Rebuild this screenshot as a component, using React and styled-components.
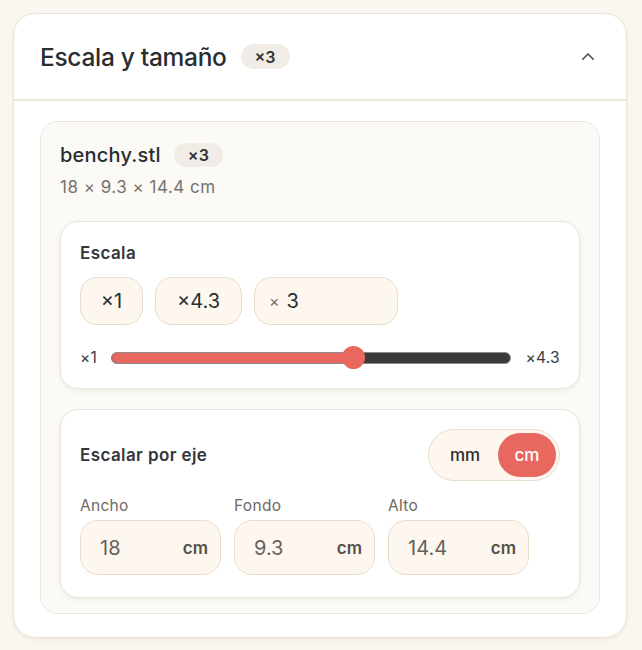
import React from 'react'
import styled, { createGlobalStyle } from 'styled-components'

const Global = createGlobalStyle`
  html, body {
    margin: 0;
    background: #fbf6ef;
    font-family: Inter, "Noto Sans", sans-serif;
    color: #2a2d31;
  }
  * { box-sizing: border-box; }
`

const Page = styled.div`
  padding: 13px 15px 12px 13px;
`

const Card = styled.section`
  background: #fff;
  border: 1px solid #e9e3d9;
  border-radius: 22px;
  box-shadow: 0 2px 4px rgba(120, 100, 70, 0.08);
  overflow: hidden;
`

const Header = styled.div`
  display: flex;
  align-items: center;
  justify-content: space-between;
  height: 87px;
  padding: 0 26px 0 26px;
  border-bottom: 2px solid #eee8df;
`

const TitleRow = styled.div`
  display: flex;
  align-items: center;
  gap: 14px;
`

const Title = styled.h2`
  margin: 0;
  font-size: 24.5px;
  font-weight: 500;
  letter-spacing: -0.3px;
  color: #2a2d31;
`

const Badge = styled.span`
  display: inline-flex;
  align-items: center;
  justify-content: center;
  height: ${({ $h }) => $h || 25}px;
  padding: 0 14px;
  border-radius: 999px;
  background: #f1ede6;
  font-size: 16px;
  font-weight: 600;
  color: #2f3134;
`

const Body = styled.div`
  padding: 20px 26px 23px 26px;
`

const FileCard = styled.div`
  background: #fbfaf7;
  border: 1px solid #ebe5db;
  border-radius: 18px;
  padding: 19px 19px 15px 19px;
`

const FileName = styled.div`
  display: flex;
  align-items: center;
  gap: 13px;
  font-size: 20px;
  font-weight: 500;
  letter-spacing: 0.2px;
  color: #2a2d31;
  height: 28px;
`

const Dims = styled.div`
  margin-top: 8px;
  font-size: 17px;
  letter-spacing: 0.5px;
  color: #77726c;
`

const Panel = styled.div`
  margin-top: ${({ $mt }) => $mt}px;
  background: #fff;
  border: 1px solid #ebe4da;
  border-radius: 18px;
  box-shadow: 0 2px 5px rgba(120, 100, 70, 0.09);
  padding: ${({ $pad }) => $pad};
`

const PanelTitle = styled.div`
  font-size: 17px;
  font-weight: 600;
  letter-spacing: 0.4px;
  color: #33363a;
`

const Chips = styled.div`
  display: flex;
  gap: 12px;
  margin-top: 14px;
`

const Chip = styled.div`
  display: flex;
  align-items: center;
  justify-content: ${({ $left }) => ($left ? 'flex-start' : 'center')};
  gap: 7px;
  height: 48px;
  width: ${({ $w }) => $w}px;
  padding: 0 14px;
  background: #fdf7ef;
  border: 1px solid #e8ddcd;
  border-radius: 17px;
  font-size: 20px;
  font-weight: 400;
  color: #2a2d31;
`

const Times = styled.span`
  font-size: 16px;
  color: #77726c;
`

const SliderRow = styled.div`
  display: flex;
  align-items: center;
  gap: 14px;
  margin-top: 23px;
  font-size: 15.5px;
  letter-spacing: 0.3px;
  color: #3a3c3f;
`

const Track = styled.div`
  position: relative;
  flex: 1;
  height: 12px;
  border-radius: 6px;
  background: #3a3a3a;
  border: 1px solid #8c8c8c;
`

const Fill = styled.div`
  height: 100%;
  border-radius: 6px 0 0 6px;
  background: #e8685f;
`

const Thumb = styled.div`
  position: absolute;
  top: 50%;
  width: 23px;
  height: 23px;
  margin: -11.5px 0 0 -11.5px;
  border-radius: 50%;
  background: #e8685f;
`

const AxisHead = styled.div`
  display: flex;
  align-items: center;
  justify-content: space-between;
`

const Toggle = styled.div`
  display: flex;
  align-items: center;
  height: 52px;
  padding: 3px;
  border-radius: 999px;
  background: #fdf7ef;
  border: 1px solid #e8ddcd;
`

const ToggleOpt = styled.div`
  display: flex;
  align-items: center;
  justify-content: center;
  height: 44px;
  width: ${({ $w }) => $w}px;
  border-radius: 999px;
  font-size: 17px;
  font-weight: 500;
  background: ${({ $on }) => ($on ? '#e8685f' : 'transparent')};
  color: ${({ $on }) => ($on ? '#fff' : '#2a2d31')};
`

const Fields = styled.div`
  display: flex;
  gap: 13px;
  margin-top: 15px;
`

const Field = styled.label`
  display: flex;
  flex-direction: column;
  gap: 5px;
`

const FieldLabel = styled.span`
  font-size: 15.5px;
  letter-spacing: 0.3px;
  color: #6d6862;
`

const FieldBox = styled.div`
  display: flex;
  align-items: center;
  justify-content: space-between;
  width: 141px;
  height: 55px;
  padding: 0 12px 0 19px;
  background: #fdf7ef;
  border: 1px solid #e8ddcd;
  border-radius: 18px;
`

const Value = styled.span`
  font-size: 20px;
  color: #66615b;
`

const Unit = styled.span`
  font-size: 17px;
  font-weight: 600;
  color: #55504b;
`

const Chevron = () => (
  <svg width="18" height="18" viewBox="0 0 24 24" fill="none" stroke="#55524d" strokeWidth="2.2" strokeLinecap="round" strokeLinejoin="round" style={{ marginRight: 3 }}>
    <path d="M5 15l7-7 7 7" />
  </svg>
)

const axes = [
  { label: 'Ancho', value: '18' },
  { label: 'Fondo', value: '9.3' },
  { label: 'Alto', value: '14.4' },
]

export default function App() {
  const pct = ((3 - 1) / (4.3 - 1)) * 100
  return (
    <Page>
      <Global />
      <Card>
        <Header>
          <TitleRow>
            <Title>Escala y tamaño</Title>
            <Badge>×3</Badge>
          </TitleRow>
          <Chevron />
        </Header>
        <Body>
          <FileCard>
            <FileName>
              benchy.stl
              <Badge $h={24}>×3</Badge>
            </FileName>
            <Dims>18 × 9.3 × 14.4 cm</Dims>

            <Panel $mt={24} $pad="21px 19px 21px 19px">
              <PanelTitle>Escala</PanelTitle>
              <Chips>
                <Chip $w={63}>×1</Chip>
                <Chip $w={87}>×4.3</Chip>
                <Chip $w={144} $left>
                  <Times>×</Times>3
                </Chip>
              </Chips>
              <SliderRow>
                <span>×1</span>
                <Track>
                  <Fill style={{ width: `${pct}%` }} />
                  <Thumb style={{ left: `${pct}%` }} />
                </Track>
                <span>×4.3</span>
              </SliderRow>
            </Panel>

            <Panel $mt={20} $pad="19px 19px 22px 19px">
              <AxisHead>
                <PanelTitle>Escalar por eje</PanelTitle>
                <Toggle>
                  <ToggleOpt $w={66}>mm</ToggleOpt>
                  <ToggleOpt $w={58} $on>cm</ToggleOpt>
                </Toggle>
              </AxisHead>
              <Fields>
                {axes.map((a) => (
                  <Field key={a.label}>
                    <FieldLabel>{a.label}</FieldLabel>
                    <FieldBox>
                      <Value>{a.value}</Value>
                      <Unit>cm</Unit>
                    </FieldBox>
                  </Field>
                ))}
              </Fields>
            </Panel>
          </FileCard>
        </Body>
      </Card>
    </Page>
  )
}
